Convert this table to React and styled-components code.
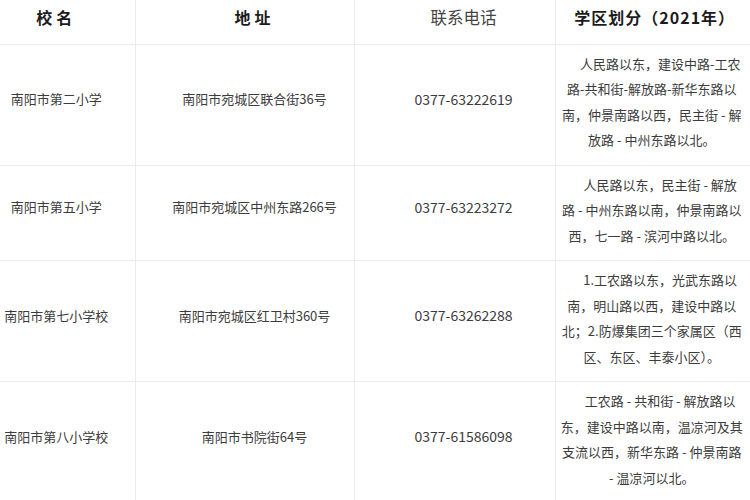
import React from 'react'
import styled, { createGlobalStyle, css } from 'styled-components'

const GlobalStyle = createGlobalStyle`
  html, body {
    margin: 0;
    padding: 0;
    background: #ffffff;
  }
  body {
    font-family: "Noto Sans CJK SC", "Noto Sans", sans-serif;
    overflow: hidden;
  }
`

const Page = styled.div`
  width: 750px;
  height: 500px;
  overflow: hidden;
  background: #ffffff;
`

const Table = styled.table`
  width: 750px;
  table-layout: fixed;
  border-collapse: collapse;
  color: #3c3c3c;
`

const Col = styled.col`
  width: ${({ w }) => w}px;
`

const HeadCell = styled.th`
  height: 44px;
  box-sizing: border-box;
  padding: 0 0 10px ${({ shift }) => shift || 0}px;
  padding-right: ${({ pad }) => pad || 0}px;
  text-align: center;
  vertical-align: middle;
  font-size: 16px;
  font-weight: ${({ light }) => (light ? 400 : 700)};
  color: ${({ light }) => (light ? '#444' : '#1c1c1c')};
  letter-spacing: ${({ spread }) => spread || 0};
  border-bottom: 1px solid #ececec;
  border-left: 1px solid #ececec;

  &:first-child {
    border-left: none;
  }

  ${({ light }) =>
    light &&
    css`
      font-size: 16.5px;
    `}
`

const Row = styled.tr`
  height: ${({ h }) => h}px;
  border-bottom: 1px solid #ececec;
`

const Cell = styled.td`
  box-sizing: border-box;
  padding: 0 ${({ pad }) => pad || 0}px 12px ${({ shift }) => shift || 0}px;
  text-align: center;
  vertical-align: middle;
  font-size: ${({ size }) => size || 13}px;
  border-left: 1px solid #ececec;

  &:first-child {
    border-left: none;
  }
`

const AreaCell = styled.td`
  box-sizing: border-box;
  padding: 6px 3px 12px 1px;
  vertical-align: top;
  border-left: 1px solid #ececec;
`

const Area = styled.p`
  margin: 0;
  font-size: 13px;
  line-height: 25.5px;
  text-align: center;
  text-indent: 1.3em;
  color: #3c3c3c;
  white-space: nowrap;
`

const schools = [
  {
    name: '南阳市第二小学',
    addr: '南阳市宛城区联合街36号',
    phone: '0377-63222619',
    h: 121,
    area: [
      '人民路以东，建设中路-工农',
      '路-共和街-解放路-新华东路以',
      '南，仲景南路以西，民主街 - 解',
      '放路 - 中州东路以北。',
    ],
  },
  {
    name: '南阳市第五小学',
    addr: '南阳市宛城区中州东路266号',
    phone: '0377-63223272',
    h: 93,
    area: [
      '人民路以东，民主街 - 解放',
      '路 - 中州东路以南，仲景南路以',
      '西，七一路 - 滨河中路以北。',
    ],
  },
  {
    name: '南阳市第七小学校',
    addr: '南阳市宛城区红卫村360号',
    phone: '0377-63262288',
    h: 120,
    area: [
      '1.工农路以东，光武东路以',
      '南，明山路以西，建设中路以',
      '北；2.防爆集团三个家属区（西',
      '区、东区、丰泰小区）。',
    ],
  },
  {
    name: '南阳市第八小学校',
    addr: '南阳市书院街64号',
    phone: '0377-61586098',
    h: 120,
    area: [
      '工农路 - 共和街 - 解放路以',
      '东，建设中路以南，温凉河及其',
      '支流以西，新华东路 - 仲景南路',
      '- 温凉河以北。',
    ],
  },
]

const App = () => {
  return (
    <Page>
      <GlobalStyle />
      <Table>
        <colgroup>
          <Col w={135} />
          <Col w={219} />
          <Col w={201} />
          <Col w={195} />
        </colgroup>
        <thead>
          <tr>
            <HeadCell spread="0.25em" pad={22}>校名</HeadCell>
            <HeadCell spread="0.25em" shift={20}>地址</HeadCell>
            <HeadCell light shift={18}>联系电话</HeadCell>
            <HeadCell spread="1px" shift={4}>学区划分（2021年）</HeadCell>
          </tr>
        </thead>
        <tbody>
          {schools.map((s) => (
            <Row key={s.name} h={s.h}>
              <Cell pad={22}>{s.name}</Cell>
              <Cell shift={20}>{s.addr}</Cell>
              <Cell shift={18} size={14}>
                {s.phone}
              </Cell>
              <AreaCell>
                <Area>
                  {s.area.map((line, i) => (
                    <React.Fragment key={i}>
                      {i > 0 && <br />}
                      {line}
                    </React.Fragment>
                  ))}
                </Area>
              </AreaCell>
            </Row>
          ))}
        </tbody>
      </Table>
    </Page>
  )
}

export default App
